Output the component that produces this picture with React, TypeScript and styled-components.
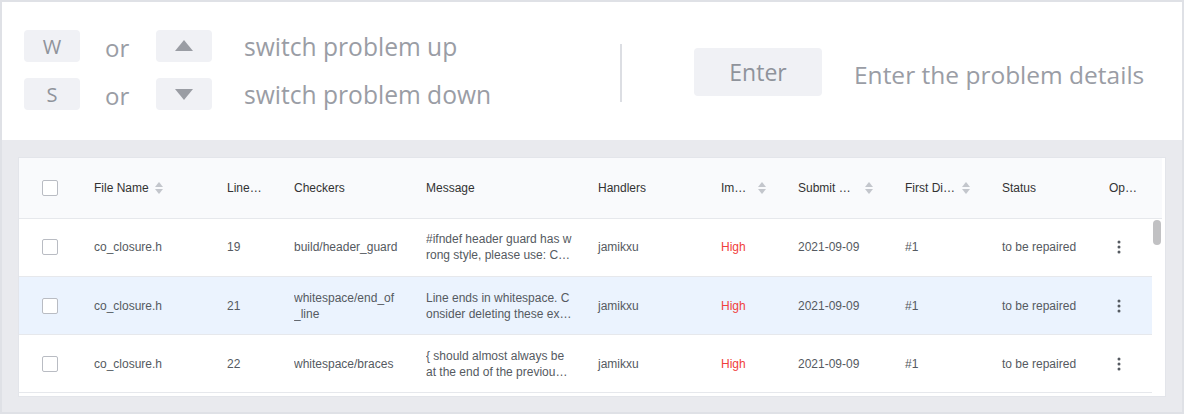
import styled, { createGlobalStyle } from 'styled-components'

const GlobalStyle = createGlobalStyle`
  html, body {
    margin: 0;
    padding: 0;
    background: #ffffff;
  }
  * {
    box-sizing: border-box;
  }
`

interface Issue {
  file: string
  line: number
  checker: string
  message: string
  handler: string
  level: string
  date: string
  first: string
  status: string
}

const issues: Issue[] = [
  {
    file: 'co_closure.h',
    line: 19,
    checker: 'build/header_guard',
    message:
      '#ifndef header guard has wrong style, please use: CO_CLOSURE_H_',
    handler: 'jamikxu',
    level: 'High',
    date: '2021-09-09',
    first: '#1',
    status: 'to be repaired',
  },
  {
    file: 'co_closure.h',
    line: 21,
    checker: 'whitespace/end_of_line',
    message:
      'Line ends in whitespace. Consider deleting these extra spaces.',
    handler: 'jamikxu',
    level: 'High',
    date: '2021-09-09',
    first: '#1',
    status: 'to be repaired',
  },
  {
    file: 'co_closure.h',
    line: 22,
    checker: 'whitespace/braces',
    message:
      '{ should almost always be at the end of the previous line',
    handler: 'jamikxu',
    level: 'High',
    date: '2021-09-09',
    first: '#1',
    status: 'to be repaired',
  },
]

// column widths of the body table, the header's last column also covers the scrollbar
const cols = [59, 133, 67, 132, 172, 123, 77, 107, 97, 107, 59]

const SortIcon = () => (
  <svg width="8" height="12" viewBox="0 0 8 12">
    <path d="M4 0 L8 5 L0 5 Z" fill="#c3c6cc" />
    <path d="M0 7 L8 7 L4 12 Z" fill="#c3c6cc" />
  </svg>
)

const MoreIcon = () => (
  <svg width="20" height="20" viewBox="0 0 20 20">
    <circle cx="10" cy="5" r="1.5" fill="#555a61" />
    <circle cx="10" cy="10" r="1.5" fill="#555a61" />
    <circle cx="10" cy="15" r="1.5" fill="#555a61" />
  </svg>
)

const Arrow = ({ down }: { down?: boolean }) => (
  <svg width="18" height="12" viewBox="0 0 18 12">
    <path d={down ? 'M0 1 L18 1 L9 12 Z' : 'M9 0 L18 11 L0 11 Z'} fill="#9a9da4" />
  </svg>
)

const headers: { title: string; sort?: boolean }[] = [
  { title: 'File Name', sort: true },
  { title: 'Line No.' },
  { title: 'Checkers' },
  { title: 'Message' },
  { title: 'Handlers' },
  { title: 'Importance', sort: true },
  { title: 'Submit Date', sort: true },
  { title: 'First Discovery', sort: true },
  { title: 'Status' },
  { title: 'Operation' },
]

const App = () => {
  return (
    <>
      <GlobalStyle />
      <Frame>
        <ShortcutPanel>
          <KeyGrid>
            <Key>W</Key>
            <Or>or</Or>
            <Key>
              <Arrow />
            </Key>
            <Hint>switch problem up</Hint>
            <Key>S</Key>
            <Or>or</Or>
            <Key>
              <Arrow down />
            </Key>
            <Hint>switch problem down</Hint>
          </KeyGrid>
          <Divider />
          <EnterKey>Enter</EnterKey>
          <EnterHint>Enter the problem details</EnterHint>
        </ShortcutPanel>

        <Content>
          <Card>
            <HeadTable>
              <colgroup>
                {cols.slice(0, 10).map((w, i) => (
                  <col key={i} style={{ width: w }} />
                ))}
                <col style={{ width: 69 }} />
              </colgroup>
              <thead>
                <tr>
                  <Th $first>
                    <Checkbox />
                  </Th>
                  {headers.map((h, i) => (
                    <Th key={h.title} $last={i === headers.length - 1}>
                      <HeadCell>
                        <HeadTitle>{h.title}</HeadTitle>
                        {h.sort && (
                          <SortWrap>
                            <SortIcon />
                          </SortWrap>
                        )}
                      </HeadCell>
                    </Th>
                  ))}
                </tr>
              </thead>
            </HeadTable>
            <BodyArea>
              <BodyTable>
                <colgroup>
                  {cols.map((w, i) => (
                    <col key={i} style={{ width: w }} />
                  ))}
                </colgroup>
                <tbody>
                  {issues.map((it, i) => (
                    <Row key={it.line} $active={i === 1}>
                      <Td $first>
                        <Checkbox />
                      </Td>
                      <Td>{it.file}</Td>
                      <Td>{it.line}</Td>
                      <Td>
                        <Clamp $width={105}>{it.checker}</Clamp>
                      </Td>
                      <Td>
                        <Clamp $width={146}>{it.message}</Clamp>
                      </Td>
                      <Td>{it.handler}</Td>
                      <Td $danger>{it.level}</Td>
                      <Td>{it.date}</Td>
                      <Td>{it.first}</Td>
                      <Td>{it.status}</Td>
                      <Td $tight>
                        <MoreIcon />
                      </Td>
                    </Row>
                  ))}
                </tbody>
              </BodyTable>
              <ScrollTrack>
                <ScrollThumb />
              </ScrollTrack>
            </BodyArea>
          </Card>
        </Content>
      </Frame>
    </>
  )
}

const Frame = styled.div`
  width: 1184px;
  height: 414px;
  border: 2px solid #dfe1e6;
  background: #e9eaee;
  display: flex;
  flex-direction: column;
  overflow: hidden;
`

const ShortcutPanel = styled.div`
  height: 138px;
  background: #ffffff;
  padding: 28px 22px 0;
  display: flex;
  align-items: flex-start;
  font-family: 'Open Sans', 'Noto Sans', sans-serif;
  color: #9a9da5;
`

const KeyGrid = styled.div`
  width: 596px;
  display: grid;
  grid-template-columns: 56px 76px 56px auto;
  grid-template-rows: 32px 32px;
  row-gap: 16px;
  align-items: center;
`

const Key = styled.div`
  height: 32px;
  border-radius: 4px;
  background: #f0f1f5;
  display: flex;
  align-items: center;
  justify-content: center;
  font-size: 20px;
  color: #8f939b;
`

const Or = styled.div`
  font-size: 24px;
  padding: 3px 0 0 25px;
`

const Hint = styled.div`
  font-size: 24.6px;
  padding-left: 32px;
  white-space: nowrap;
`

const Divider = styled.div`
  width: 2px;
  height: 58px;
  margin-top: 14px;
  background: #dcdee3;
`

const EnterKey = styled.div`
  width: 128px;
  height: 48px;
  margin: 18px 32px 0 72px;
  border-radius: 4px;
  background: #f0f1f5;
  display: flex;
  align-items: center;
  justify-content: center;
  font-size: 23px;
  color: #8f939b;
`

const EnterHint = styled.div`
  margin-top: 28px;
  font-size: 24.5px;
  white-space: nowrap;
`

const Content = styled.div`
  flex: 1;
  padding: 17px 16px 15px;
`

const Card = styled.div`
  background: #ffffff;
  border: 1px solid #e3e5ea;
  padding-right: 3px;
  font-family: 'Liberation Sans', Arial, sans-serif;
  font-size: 12px;
`

const HeadTable = styled.table`
  width: 1143px;
  table-layout: fixed;
  border-collapse: collapse;
  background: #f9fafc;
`

const Th = styled.th<{ $first?: boolean; $last?: boolean }>`
  height: 60px;
  padding: ${({ $first, $last }) =>
    $first ? '0 0 0 23px' : $last ? '0 22px 0 16px' : '0 16px'};
  text-align: left;
  font-weight: normal;
  color: #333;
  border-bottom: 1px solid #e6e8ec;
`

const HeadCell = styled.div`
  display: flex;
  align-items: center;
  min-width: 0;
`

const HeadTitle = styled.span`
  flex: 0 1 auto;
  min-width: 0;
  overflow: hidden;
  white-space: nowrap;
  text-overflow: ellipsis;
`

const SortWrap = styled.span`
  flex: none;
  display: flex;
  margin-left: 6px;
`

const BodyArea = styled.div`
  display: flex;
  padding-bottom: 3px;
`

const BodyTable = styled.table`
  width: 1133px;
  table-layout: fixed;
  border-collapse: collapse;
`

const Row = styled.tr<{ $active?: boolean }>`
  background: ${({ $active }) => ($active ? '#ebf3fe' : '#ffffff')};
`

const Td = styled.td<{ $first?: boolean; $danger?: boolean; $tight?: boolean }>`
  height: 58px;
  padding: ${({ $first, $tight }) =>
    $first ? '0 0 0 23px' : $tight ? '0 0 0 16px' : '0 16px'};
  color: ${({ $danger }) => ($danger ? '#f0403c' : '#555a61')};
  border-bottom: 1px solid #e6e8ec;
  white-space: nowrap;
  vertical-align: middle;

  svg {
    display: block;
  }
`

const Clamp = styled.div<{ $width: number }>`
  width: ${({ $width }) => $width}px;
  white-space: normal;
  word-break: break-all;
  line-height: 16px;
  display: -webkit-box;
  -webkit-line-clamp: 2;
  -webkit-box-orient: vertical;
  overflow: hidden;
`

const Checkbox = styled.span`
  display: block;
  width: 16px;
  height: 16px;
  border: 1px solid #b9bcc3;
  border-radius: 2px;
  background: #ffffff;
`

const ScrollTrack = styled.div`
  width: 10px;
  padding: 1px 1px 0;
  background: #ffffff;
`

const ScrollThumb = styled.div`
  width: 8px;
  height: 25px;
  border-radius: 4px;
  background: #c1c1c3;
`

export default App
